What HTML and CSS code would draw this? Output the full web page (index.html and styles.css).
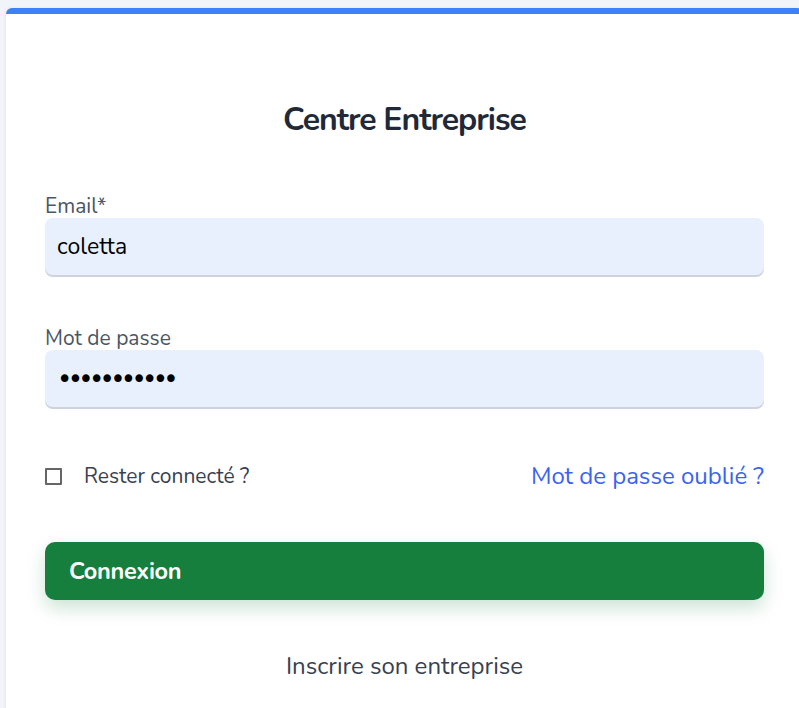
FILE: index.html
```html
<!DOCTYPE html>
<html lang="fr">
<head>
<meta charset="utf-8">
<title>Centre Entreprise</title>
<link rel="stylesheet" href="styles.css">
</head>
<body>
<div class="card">
  <h1 class="title">Centre Entreprise</h1>
  <form class="form">
    <div class="field">
      <label class="label">Email*</label>
      <div class="input">coletta</div>
    </div>
    <div class="field">
      <label class="label">Mot de passe</label>
      <div class="input password">•••••••••••</div>
    </div>
    <div class="options">
      <label class="remember"><span class="checkbox"></span><span>Rester connecté ?</span></label>
      <a class="forgot" href="#">Mot de passe oublié ?</a>
    </div>
    <button class="submit" type="button">Connexion</button>
  </form>
  <div class="register">Inscrire son entreprise</div>
</div>
</body>
</html>
```

FILE: styles.css
```css
html, body {
  margin: 0;
  padding: 0;
}
body {
  background: #f1f4f9;
  overflow: hidden;
  height: 708px;
  font-family: "Nunito", "Lato", "Noto Sans", sans-serif;
}
.card {
  margin: 8px 0 0 6px;
  width: 797px;
  box-sizing: border-box;
  height: 720px;
  background: #ffffff;
  border-top: 6px solid #3b82f6;
  border-radius: 6px 6px 0 0;
  padding: 86px 39px 0 39px;
  box-shadow: -1px 0 3px rgba(0, 0, 0, 0.06);
}
.title {
  margin: 0;
  text-align: center;
  font-size: 32px;
  line-height: 40px;
  font-weight: 700;
  color: #1f2937;
  letter-spacing: -1px;
}
.form {
  margin-top: 55px;
  display: flex;
  flex-direction: column;
}
.field {
  display: flex;
  flex-direction: column;
}
.field + .field {
  margin-top: 52px;
}
.label {
  font-size: 21px;
  line-height: 23px;
  color: #4b5563;
}
.input {
  height: 57px;
  box-sizing: border-box;
  background: #e8f0fe;
  border-radius: 8px;
  box-shadow: 0 2px 0 #cdd2dd;
  padding: 0 12px;
  display: flex;
  align-items: center;
  font-size: 23px;
  color: #000000;
}
.password {
  font-family: "DejaVu Sans", sans-serif;
  font-size: 26px;
  letter-spacing: -4.7px;
}
.options {
  margin-top: 57px;
  height: 24px;
  display: flex;
  align-items: center;
  justify-content: space-between;
}
.remember {
  display: flex;
  align-items: center;
  font-size: 21px;
  color: #374151;
}
.checkbox {
  width: 13px;
  height: 13px;
  border: 2px solid #666;
  border-radius: 1px;
  margin: 0 22px 0 0;
}
.forgot {
  font-size: 24px;
  color: #3b63f0;
  text-decoration: none;
}
.submit {
  margin-top: 54px;
  height: 58px;
  border: none;
  border-radius: 10px;
  background: #167f3e;
  color: #ffffff;
  font-family: inherit;
  font-size: 23.5px;
  font-weight: 700;
  text-align: left;
  padding: 0 24px;
  letter-spacing: -0.3px;
  box-shadow: 0 8px 18px rgba(22, 127, 62, 0.22);
}
.register {
  margin-top: 54px;
  text-align: center;
  font-size: 24px;
  line-height: 24px;
  color: #374151;
}
```
